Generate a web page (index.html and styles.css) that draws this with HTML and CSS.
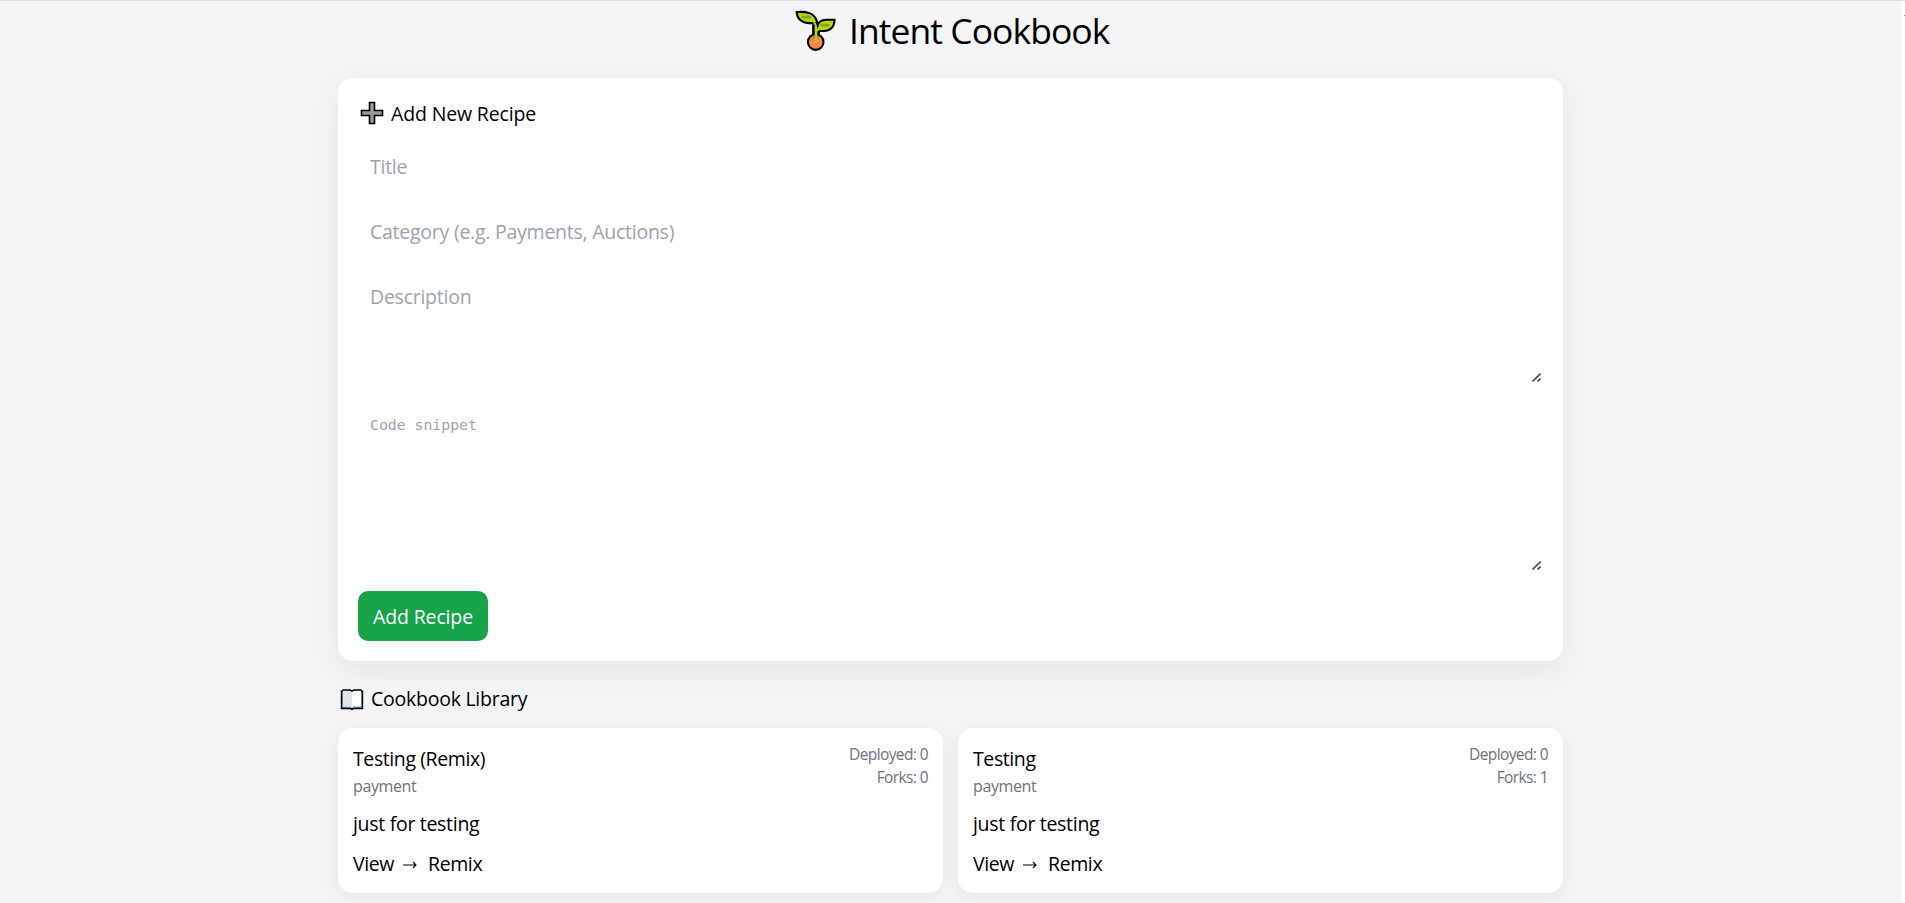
FILE: index.html
```html
<!DOCTYPE html>
<html lang="en">
<head>
<meta charset="utf-8">
<title>Intent Cookbook</title>
<link rel="stylesheet" href="styles.css">
</head>
<body>
<div class="viewport">
<main class="page">
  <h1 class="page-title">
    <svg class="seedling" viewBox="0 0 40 40" aria-hidden="true">
      <circle cx="20.2" cy="31.3" r="7.6" fill="#f7894a" stroke="#000" stroke-width="2"/>
      <path d="M17 25.5L20 32L24 25.5Z" fill="#d06a35"/>
      <path d="M18.8 24V14M22.2 24V19" stroke="#000" stroke-width="4.2" fill="none"/>
      <path d="M1.6 1.9C11 1.4 19 2.3 21.6 11.6V12.8H14C6 12.8 1.8 7.8 1.6 1.9Z" fill="#b8d40c" stroke="#000" stroke-width="2"/>
      <path d="M38.6 9.6C38.6 16 34.8 20.2 28.5 20.4H21.5V17C22 11.5 26 9.6 31 9.6Z" fill="#b8d40c" stroke="#000" stroke-width="2"/>
      <path d="M17 12H20L22.3 18.8L24 19.4L21.8 21V32H19.2V14.5Z" fill="#b8d40c"/>
      <path d="M7.5 7H14.5M26 14.7H32.5" stroke="#74aa1b" stroke-width="2.6" stroke-linecap="round"/>
    </svg>
    <span class="title-text">Intent Cookbook</span>
  </h1>

  <form class="recipe-form">
    <h2 class="section-title form-title">
      <svg class="icon" viewBox="0 0 24 24" aria-hidden="true">
        <path d="M9.5 1.5H14.5V9.5H22.5V14.5H14.5V22.5H9.5V14.5H1.5V9.5H9.5Z" fill="#9b9b9b" stroke="#000" stroke-width="1.6"/>
      </svg>
      <span>Add New Recipe</span>
    </h2>
    <input class="field" type="text" placeholder="Title">
    <input class="field field-category" type="text" placeholder="Category (e.g. Payments, Auctions)">
    <div class="area area-description">
      <textarea class="field" placeholder="Description"></textarea>
      <svg class="grip" viewBox="0 0 9 9" aria-hidden="true"><path d="M.5 8.4L8.6 .6M5.5 8.4L8.6 5.6" stroke="#505050" stroke-width="1.8"/></svg>
    </div>
    <div class="area area-code">
      <textarea class="field code" placeholder="Code snippet"></textarea>
      <svg class="grip" viewBox="0 0 9 9" aria-hidden="true"><path d="M.5 8.4L8.6 .6M5.5 8.4L8.6 5.6" stroke="#505050" stroke-width="1.8"/></svg>
    </div>
    <button class="submit" type="button">Add Recipe</button>
  </form>

  <h2 class="section-title library-title">
    <svg class="icon" viewBox="0 0 24 24" aria-hidden="true">
      <path d="M1.5 4H22.5V21.5H1.5Z" fill="#5f9bc9" stroke="#000" stroke-width="1.4"/>
      <path d="M3 3.3H10.5L12 4.3L13.5 3.3H21V19.5H13.5L12 21L10.5 19.5H3Z" fill="#fff"/>
      <path d="M3 3.3H10.5L12 4.3V21L10.5 19.5H3Z" fill="#e4e4e6"/>
      <path d="M2.5 3H10.3L12 4.2L13.7 3H21.5M10 21.3L12 22.4L14 21.3" fill="none" stroke="#000" stroke-width="1.3"/>
    </svg>
    <span class="library-title-text">Cookbook Library</span>
  </h2>

  <section class="library">
    <article class="card">
      <div class="card-head">
        <div><h3 class="name">Testing (Remix)</h3><p class="category">payment</p></div>
        <div class="stats"><div>Deployed: 0</div><div>Forks: 0</div></div>
      </div>
      <p class="summary">just for testing</p>
      <div class="actions"><span>View</span><svg class="arrow" viewBox="0 0 14 8" aria-hidden="true"><path d="M0 4H13M10 1L13 4L10 7" fill="none" stroke="#000" stroke-width="1.1"/></svg><span>Remix</span></div>
    </article>
    <article class="card">
      <div class="card-head">
        <div><h3 class="name">Testing</h3><p class="category">payment</p></div>
        <div class="stats"><div>Deployed: 0</div><div>Forks: 1</div></div>
      </div>
      <p class="summary">just for testing</p>
      <div class="actions"><span>View</span><svg class="arrow" viewBox="0 0 14 8" aria-hidden="true"><path d="M0 4H13M10 1L13 4L10 7" fill="none" stroke="#000" stroke-width="1.1"/></svg><span>Remix</span></div>
    </article>
  </section>
</main>
<div class="scrollbar"><span class="scroll-arrow"></span></div>
</div>
</body>
</html>
```
FILE: styles.css
```css
* { box-sizing: border-box; margin: 0; padding: 0; }
body {
  font-family: "Open Sans", "Noto Sans", sans-serif;
  font-size: 19.5px;
  line-height: 30px;
  letter-spacing: -0.25px;
  color: #000;
  background: #f3f4f6;
  overflow: hidden;
}
.viewport { display: flex; height: 903px; border-top: 1px solid #dae4e8; overflow: hidden; }
.page { flex: 1; padding: 7px 0 0 338px; }
.scrollbar { width: 4px; background: #fcfcfc; padding: 14px 0 0 3px; }
.scroll-arrow { display: block; width: 1px; height: 1px; background: #8b8b8b; }

.page-title {
  display: flex;
  width: 1225px;
  height: 45px;
  padding-left: 457px;
  font-size: 35.5px;
  font-weight: 400;
  line-height: 45px;
  white-space: nowrap;
}
.seedling { width: 41px; height: 41px; margin-top: 2px; }
.title-text { margin-left: 13px; letter-spacing: -0.95px; }

.recipe-form {
  width: 1225px;
  height: 583px;
  margin-top: 25px;
  padding: 20px;
  border-radius: 15px;
  background: #fff;
  box-shadow: 0 10px 30px rgba(0, 0, 0, .06);
}
.section-title { display: flex; align-items: center; font-size: 19.5px; font-weight: 400; line-height: 30px; }
.icon { width: 24px; height: 24px; margin: 0 7px 0 2px; }
.form-title { height: 30px; margin-bottom: 13px; letter-spacing: -0.15px; }
.form-title span { padding-top: 2px; }
.field {
  display: block;
  width: 100%;
  height: 50px;
  padding: 10px 12px;
  border: 0;
  outline: 0;
  resize: none;
  background: transparent;
  font: inherit;
  letter-spacing: inherit;
}
.field::placeholder { color: #9ca3af; opacity: 1; }
.field-category { margin-top: 15px; }
.area { position: relative; margin-top: 15px; }
.area .field { height: 100%; padding-top: 11px; }
.area-description { height: 113px; }
.area-code { height: 173px; }
.area .code { padding-top: 13px; font-family: "DejaVu Sans Mono", monospace; font-size: 14.8px; line-height: 25px; letter-spacing: 0; }
.grip { position: absolute; right: 2px; bottom: 2px; width: 9px; height: 9px; }
.submit {
  display: block;
  width: 130px;
  height: 50px;
  margin-top: 19px;
  padding-top: 1px;
  border: 0;
  border-radius: 10px;
  background: #16a34a;
  color: #fff;
  font: inherit;
  letter-spacing: -0.15px;
}

.library-title { height: 30px; margin-top: 23px; }
.library { display: grid; grid-template-columns: 605px 605px; gap: 15px; margin-top: 14px; }
.card {
  height: 165px;
  padding: 15px;
  border-radius: 15px;
  background: #fff;
  box-shadow: 0 5px 18px rgba(0, 0, 0, .055);
}
.card-head { display: flex; justify-content: space-between; }
.name { margin-top: 1px; font-size: 19.5px; font-weight: 400; line-height: 30px; letter-spacing: -0.4px; }
.category, .stats { color: #6b7280; }
.category { font-size: 16px; line-height: 25px; letter-spacing: -0.4px; }
.stats { font-size: 15.5px; line-height: 23px; letter-spacing: -0.6px; text-align: right; }
.summary { margin-top: 10px; line-height: 30px; letter-spacing: -0.3px; }
.actions { display: flex; align-items: center; margin-top: 10px; line-height: 30px; letter-spacing: -0.4px; }
.arrow { width: 14px; height: 8px; margin: 1px 11px 0 9px; }
```
